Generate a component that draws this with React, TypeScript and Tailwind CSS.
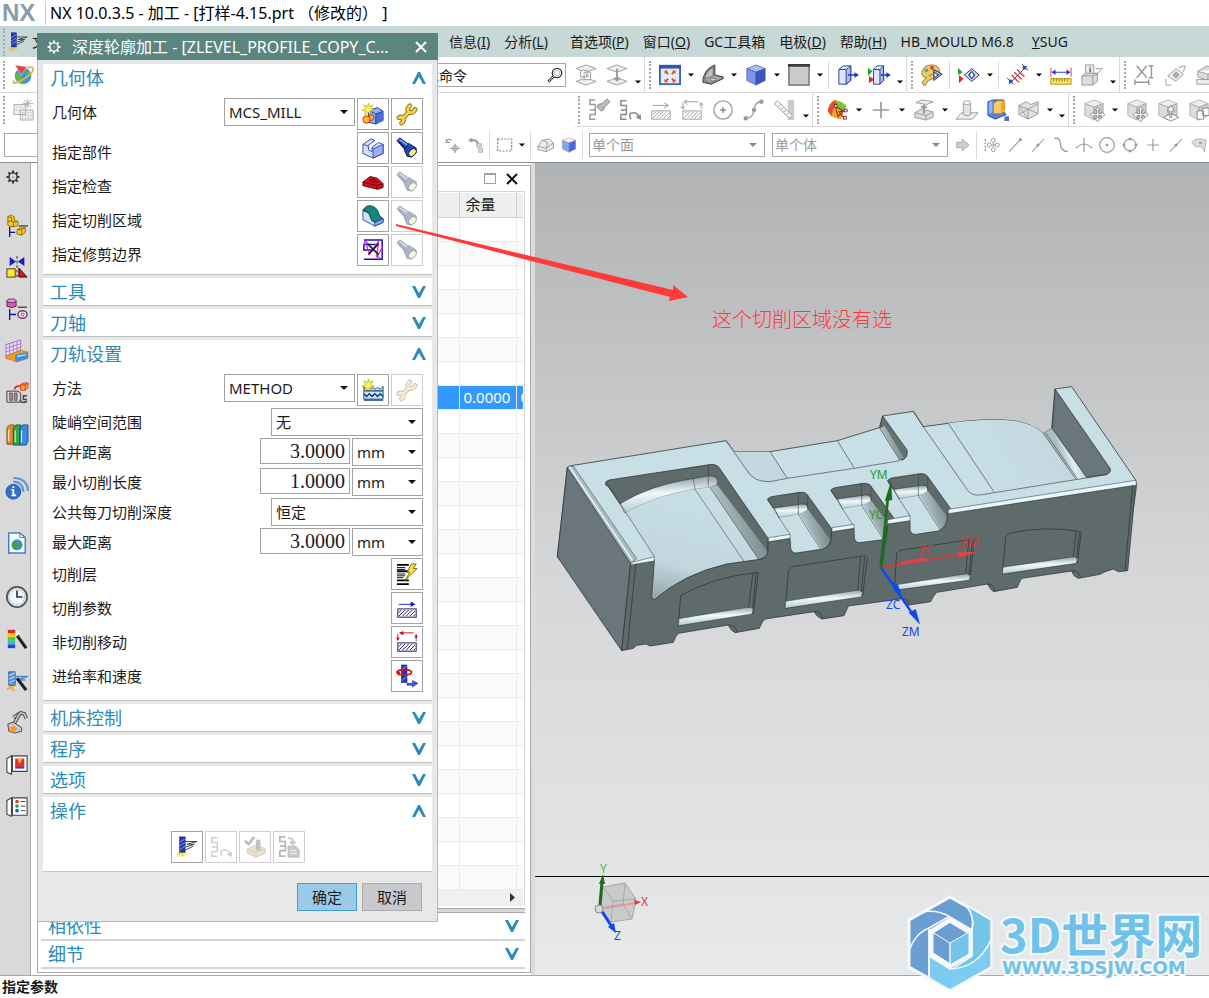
import React from 'react';

const BLUE = '#2e8ab8';

const flashlight = (
  <>
    <path d="M1 4 L4 1 L14 8 L10 14 Z" fill="#2f63d8" stroke="#0b1a6b" />
    <path d="M4 3 L13 9" stroke="#8db8ff" strokeWidth="1.4" />
    <path d="M3 5 L10 12" stroke="#0a1760" strokeWidth="1.6" />
    <path d="M14 7 L22 12 L22 17 L17 22 L12 21 L9 14 Z" fill="#2046b4" stroke="#0b1a6b" />
    <ellipse cx="18" cy="17" rx="3.4" ry="5" transform="rotate(42 18 17)" fill="#f9f16a" stroke="#0b1a6b" />
  </>
);

const wrenchShape = 'M15 3 Q11 7 14 10 Q18 12 21 7 M14 10 L7 17 M3 16 Q6 14 8 17 Q9 20 6 22';

const wrench = (
  <>
    <path d={wrenchShape} stroke="#8a6508" strokeWidth="5" strokeLinecap="round" strokeLinejoin="round" />
    <path d={wrenchShape} stroke="#f7cf48" strokeWidth="3.2" strokeLinecap="round" strokeLinejoin="round" />
  </>
);

const star = (
  <path d="M7 0 L8 4 L12 2 L10 6 L13 8 L9 9 L10 13 L7 10 L3 13 L4 9 L0 8 L4 6 L2 2 L6 4 Z" fill="#fff04a" stroke="#8f9a20" strokeWidth="0.6" />
);

const hatch = (color: string) => (
  <>
    <rect x="2" y="13" width="20" height="9" fill="#fff" stroke={color} />
    <path d="M3 21 L10 14 M7 21 L14 14 M11 21 L18 14 M15 21 L21 15 M19 21 L21 19 M3 17 L6 14" stroke={color} />
  </>
);

const tool = (
  <>
    <rect x="4" y="1" width="6" height="17" fill="#2438b0" stroke="#0b145e" strokeWidth="0.6" />
    <path d="M4 7 L10 3 M4 11 L10 7 M4 15 L10 11" stroke="#8d9ff0" />
    <path d="M10 6 H23 L12 9 H20 L11 12 M19 11 L11 15" stroke="#333b40" fill="none" />
    <path d="M1 21 L5 18 L3 23 M7 18 V23 M9 18 L12 21 M2 18 L10 22" stroke="#e8bd1c" />
  </>
);

const cube = (top: string, left: string, right: string, line: string) => (
  <>
    <path d="M12 1 L22 5 L12 9 L2 5 Z" fill={top} stroke={line} strokeWidth="0.7" />
    <path d="M2 5 L12 9 V23 L2 18 Z" fill={left} stroke={line} strokeWidth="0.7" />
    <path d="M22 5 L12 9 V23 L22 18 Z" fill={right} stroke={line} strokeWidth="0.7" />
  </>
);

const move = <path d="M16 9 L19 12 H17 V16 H20 V14 L24 17 L20 21 V18 H17 V21 H19 L16 25 L13 21 H15 V18 H12 V21 L8 17 L12 14 V16 H15 V12 H13 Z" fill="#fff" stroke="#7d7d7d" strokeWidth="0.9" />;

const s = '#9a9a9a';

const icons: Record<string, React.ReactNode> = {
  flashlight,
  wrench,
  tool,
  gear: (
    <>
      <circle cx="12" cy="12" r="7" fill="none" stroke="currentColor" strokeWidth="2.4" />
      <path d="M12 1 V5 M12 19 V23 M1 12 H5 M19 12 H23 M4 4 L7 7 M17 17 L20 20 M20 4 L17 7 M7 17 L4 20" stroke="currentColor" strokeWidth="3.4" />
      <circle cx="12" cy="12" r="1" fill="currentColor" />
    </>
  ),
  globe: (
    <>
      <circle cx="11" cy="13" r="9" fill="#3a97d8" />
      <path d="M4 9 Q10 10 10 15 T13 22 Q4 21 2 13 Z M15 6 L20 12 Q17 15 14 11 Z" fill="#62b746" />
      <path d="M1 18 Q-1 23 7 19 Q19 13 22 7 Q23 2 15 4" fill="none" stroke="#e0b34b" strokeWidth="2" />
      <path d="M2 1 L15 3 L9 12 Z" fill="#e0434a" stroke="#fff" strokeWidth="0.5" />
    </>
  ),
  grayGrid: (
    <>
      <path d="M1 6 H14 V17 H1 Z M8 12 H22 V23 H8 Z" fill="#eee" stroke="#aaa" />
      <path d="M3 9 H12 M3 12 H8 M10 15 H20 M10 18 H20 M10 21 H20" stroke="#999" strokeDasharray="1 2" />
      <path d="M16 0 V10 M11 5 H22 M12 1 L20 9 M20 1 L12 9" stroke="#aaa" />
    </>
  ),
  search: (
    <>
      <circle cx="15" cy="9" r="7" fill="none" stroke="#333" strokeWidth="2" />
      <circle cx="15" cy="9" r="4" fill="none" stroke="#999" />
      <path d="M10 14 L2 22" stroke="#333" strokeWidth="4" />
      <path d="M10 14 L3 21" stroke="#fff" strokeWidth="1.4" />
    </>
  ),
  layers: (
    <>
      <path d="M1 5 L12 1 L23 5 L12 9 Z M1 19 L12 15 L23 19 L12 23 Z" fill="#eee" stroke={s} />
      <path d="M6 7 H13 V14 H6 Z M10 9 H17 V17 H10 Z" fill="#fff" stroke={s} />
      <path d="M12 12 H15 M12 14 H15" stroke={s} />
    </>
  ),
  layersUp: (
    <>
      <path d="M1 5 L12 1 L23 5 L12 9 Z M1 19 L12 15 L23 19 L12 23 Z" fill="#eee" stroke={s} />
      <path d="M12 5 V17 M9 15 L12 18 L15 15" stroke={s} strokeWidth="2" />
    </>
  ),
  fit: (
    <>
      <rect x="1" y="2" width="22" height="20" fill="#e6ecf7" stroke="#3d63b0" strokeWidth="2" />
      <rect x="0" y="1" width="24" height="4" fill="#2f58ab" />
      <path d="M6 7 H10 L6 11 Z M18 7 H14 L18 11 Z M6 20 H10 L6 16 Z M18 20 H14 L18 16 Z" fill="#e64a25" />
      <path d="M7 8 L10 11 M17 8 L14 11 M7 19 L10 16 M17 19 L14 16" stroke="#e64a25" strokeWidth="2" />
    </>
  ),
  bracket: (
    <>
      <path d="M1 17 Q3 7 10 3 L14 1 V12 L23 14 V16 L10 22 L1 20 Z" fill="#8d8d8d" stroke="#333" />
      <path d="M3 16 Q5 7 12 4 V13 Z" fill="#c2c2c2" stroke="#555" strokeWidth="0.6" />
      <path d="M3 17 L13 13 L22 15 L10 20 Z" fill="#aaa" />
      <ellipse cx="12" cy="17" rx="3" ry="1.5" fill="#ddd" stroke="#333" strokeWidth="0.6" />
    </>
  ),
  cube: cube('#b3bdf3', '#8194e8', '#3c56bd', '#3b4f9e'),
  square: (
    <>
      <rect x="1" y="1" width="22" height="22" fill="#cacaca" stroke="#333" />
      <rect x="0" y="0" width="24" height="3" fill="#3a3a3a" />
    </>
  ),
  clip: (
    <>
      <path d="M2 6 L7 2 H15 V18 L10 22 H2 Z" fill="#dfe6fb" stroke="#223a8e" />
      <path d="M10 6 L15 2 V18 L10 22 Z" fill="#a9bdf3" stroke="#223a8e" />
      <path d="M2 6 H10" fill="none" stroke="#223a8e" />
      <path d="M12 12 H21" stroke="#1f2fd0" strokeWidth="1.6" />
      <path d="M19 9 L24 12 L19 15 Z" fill="#1f2fd0" />
    </>
  ),
  clipAll: (
    <>
      <path d="M0 4 L5 8 L0 13 Z" fill="#2da33b" />
      <path d="M1 13 L7 17 L1 21 Z" fill="#d8282c" />
      <path d="M6 6 L10 2 H17 V18 L13 22 H6 Z" fill="#dfe6fb" stroke="#223a8e" />
      <path d="M13 6 L17 2 V18 L13 22 Z" fill="#a9bdf3" stroke="#223a8e" />
      <path d="M6 6 H13" fill="none" stroke="#223a8e" />
      <path d="M14 12 H22" stroke="#1f2fd0" strokeWidth="1.6" />
      <path d="M20 9 L25 12 L20 15 Z" fill="#1f2fd0" />
    </>
  ),
  palette: (
    <>
      <path d="M1 9 Q3 1 12 1 Q21 2 20 9 Q18 14 12 12 L9 12 L13 16 L8 18 L4 24 L1 20 L6 15 Q0 14 1 9 Z" fill="#f1c95d" stroke="#94701c" />
      <circle cx="6" cy="7" r="2" fill="#3fa9e8" />
      <circle cx="12" cy="4" r="2" fill="#dd3c3c" />
      <path d="M14 6 L23 11 L14 18 Z" fill="#aac" stroke="#1c2d69" />
      <path d="M14 9 L19 12 L14 15 Z" fill="#fff" stroke="#1c2d69" />
    </>
  ),
  eye: (
    <>
      <path d="M0 4 L5 9 L0 12 Z" fill="#2da33b" />
      <path d="M1 12 L6 16 L1 21 Z" fill="#d8282c" />
      <path d="M7 12 L15 5 L23 12 L15 19 Z" fill="#d5dcef" stroke="#1c2d69" />
      <path d="M11 12 L15 7 L19 12 L15 17 Z" fill="#2b479c" />
      <path d="M13 12 L15 9 L17 12 L15 15 Z" fill="#fff" />
    </>
  ),
  spline: (
    <>
      <path d="M2 22 L22 2" stroke="#23308e" />
      <path d="M5 12 L13 20 M8 9 L16 17 M11 6 L19 14" stroke="#e23b3b" strokeWidth="1.6" />
      <path d="M0 15 L7 22 M16 0 L23 7" stroke="#222" />
      <circle cx="4" cy="19" r="2" fill="#2645e0" />
      <circle cx="19" cy="4" r="2" fill="#2645e0" />
    </>
  ),
  measure: (
    <>
      <rect x="1" y="16" width="22" height="6" fill="#ffe45c" stroke="#a88c13" />
      <path d="M4 16 V19 M7 16 V19 M10 16 V19 M13 16 V19 M16 16 V19 M19 16 V19" stroke="#8d7510" />
      <path d="M1 4 V14 M23 4 V14" stroke="#d33" />
      <path d="M2 9 H22" stroke="#2335c2" />
      <path d="M2 9 L6 6 V12 Z M22 9 L18 6 V12 Z" fill="#2335c2" />
    </>
  ),
  info: (
    <>
      <path d="M1 13 L6 10 H18 V19 L13 23 H1 Z" fill="#ddd" stroke={s} />
      <path d="M1 13 H13 L18 10 M13 13 V23" fill="none" stroke={s} />
      <rect x="5" y="1" width="9" height="9" fill="#eee" stroke={s} />
      <path d="M10 3 V4 M10 5 V9" stroke="#777" strokeWidth="2" />
      <path d="M16 13 L23 5 H16" fill="none" stroke={s} />
    </>
  ),
  dimX: (
    <path d="M3 2 L14 15 M14 2 L3 15 M1 17 V23 M16 17 V23 M1 20 H16 M16 2 H21 M16 15 H21 M19 2 V15" fill="none" stroke={s} strokeWidth="1.6" />
  ),
  rotate: (
    <>
      <path d="M3 13 L12 5 L20 11 L12 19 Z" fill="#eee" stroke={s} />
      <path d="M8 12 L12 8 L16 12 L12 16 Z" fill="#aaa" />
      <path d="M15 4 L22 2 L20 9 M1 16 V23 H7" fill="none" stroke={s} />
    </>
  ),
  boxRuler: (
    <>
      <path d="M2 8 L12 2 L23 6 V14 L13 18 L2 14 Z M2 8 L13 11 L23 6 M13 11 V18" fill="#ddd" stroke={s} />
      <rect x="1" y="17" width="22" height="5" fill="#eee" stroke={s} />
    </>
  ),
  pathLight: (
    <>
      <path d="M8 1 H2 V6 H8 V12 H2 M8 12 V17 H2 M2 17 V22 H8" fill="none" stroke={s} strokeWidth="1.6" />
      <path d="M24 3 L21 0 L15 5 L11 6 L10 9 L14 13 L17 12 L18 9 Z" fill="#bbb" stroke="#888" />
    </>
  ),
  pathRedo: (
    <>
      <path d="M8 2 H2 V7 H8 V12 H2 M8 12 V17 H2 M2 17 V22 H8" fill="none" stroke="#8a8a8a" strokeWidth="1.6" />
      <path d="M13 22 Q9 15 16 15 Q20 15 22 20" fill="none" stroke="#8a8a8a" strokeWidth="1.8" />
      <path d="M18 20 L24 17 V23 Z" fill="#8a8a8a" />
    </>
  ),
  hatchGray: (
    <>
      {hatch(s)}
      <path d="M3 7 H20 M15 4 L20 7 L15 10" fill="none" stroke={s} />
    </>
  ),
  hatchGray2: (
    <>
      {hatch(s)}
      <path d="M4 3 H19 M7 1 L3 3 L7 6 M2 4 V11 M0 8 L2 11 L4 8 M22 11 V4 M20 7 L22 4 L24 7" fill="none" stroke={s} />
    </>
  ),
  circlePlus: (
    <>
      <circle cx="12" cy="12" r="10" fill="none" stroke={s} strokeWidth="1.4" />
      <path d="M12 9 V15 M9 12 H15" stroke={s} strokeWidth="2" />
    </>
  ),
  curve: (
    <>
      <path d="M3 21 Q11 21 12 12 Q13 3 20 3" fill="none" stroke={s} strokeWidth="1.4" />
      <circle cx="3" cy="21" r="2.4" fill={s} />
      <circle cx="12" cy="12" r="2.4" fill={s} />
      <circle cx="20" cy="3" r="2.4" fill={s} />
    </>
  ),
  ruler: (
    <>
      <rect x="15" y="1" width="7" height="22" fill="#ccc" />
      <path d="M0 5 L4 2 L20 18 L17 21 Z" fill="#f4f4f4" stroke={s} />
      <path d="M5 8 L7 6 M8 11 L10 9 M11 14 L13 12 M14 17 L16 15" stroke={s} />
    </>
  ),
  rainbow: (
    <>
      <path d="M1 14 Q1 4 9 1 Q17 2 21 8 L15 22 Q6 22 1 14 Z" fill="#f2a62b" />
      <path d="M1 13 Q2 4 9 1 L11 5 Q6 10 5 19 Z" fill="#e34b32" />
      <path d="M11 3 Q17 3 21 8 L18 14 Q12 14 11 3 Z" fill="#6ccb3a" />
      <path d="M9 8 L18 13 M9 8 L12 19 L18 13 L13 14 L18 20" fill="none" stroke="#a81f1f" strokeWidth="1.2" />
      <path d="M8 6 H11 V9 H8 Z M19 11 H22 V14 H19 Z M18 19 H21 V22 H18 Z" fill="#fff" stroke="#712222" />
    </>
  ),
  plus: <path d="M12 3 V21 M3 12 H21" stroke={s} strokeWidth="1.8" />,
  extrude: (
    <>
      <path d="M3 4 L10 1 L22 3 L15 6 Z" fill="#eee" stroke={s} />
      <path d="M2 15 L9 11 L22 14 V20 L14 23 L2 20 Z" fill="#ddd" stroke={s} />
      <path d="M2 15 L14 18 L22 14 M14 18 V23" fill="none" stroke={s} />
      <path d="M12 16 V8 M9 10 L12 7 L15 10" fill="none" stroke={s} strokeWidth="2" />
    </>
  ),
  boss: (
    <>
      <path d="M0 22 L6 15 H24 L18 22 Z" fill="#eee" stroke={s} />
      <path d="M8 4 V17 Q12 20 16 17 V4" fill="#e4e4e4" stroke={s} />
      <ellipse cx="12" cy="4" rx="4" ry="2" fill="#fff" stroke={s} />
    </>
  ),
  blueBox: (
    <>
      <path d="M1 3 L6 1 H18 V14 L21 17 L9 22 L1 18 Z" fill="#4e83e0" stroke="#2950a8" />
      <path d="M2 3 L6 2 V15 L2 16 Z" fill="#8fb5f3" />
      <path d="M7 5 L11 2 H19 V13 L15 16 H7 Z" fill="#ffce5a" stroke="#b98011" />
      <path d="M15 5 L19 2 V13 L15 16 Z" fill="#f0a93a" />
      <rect x="19" y="19" width="5" height="5" fill="#56c" />
    </>
  ),
  mesh: (
    <>
      <path d="M1 7 L9 3 L14 6 L22 3 V16 L11 22 L1 17 Z" fill="#e2e2e2" stroke={s} />
      <path d="M1 7 L11 11 L22 5 M11 11 V22 M1 7 L11 22 M11 11 L22 16 M1 17 L11 11" fill="none" stroke={s} />
    </>
  ),
  cubeMove: (
    <>
      {cube('#eee', '#ddd', '#ccc', s)}
      {move}
    </>
  ),
  cubeUp: (
    <>
      {cube('#eee', '#ddd', '#ccc', s)}
      <path d="M7 20 L15 16 L24 20 L15 24 Z M15 7 L19 13 H16 V20 H14 V13 H11 Z" fill="#fff" stroke="#888" />
    </>
  ),
  cubeCopy: (
    <>
      {cube('#eee', '#ddd', '#ccc', s)}
      <path d="M10 13 H17 V22 H10 Z M16 10 H23 V18 H16 Z" fill="#fff" stroke="#888" />
    </>
  ),
  orient: (
    <>
      <path d="M2 8 Q4 1 10 5 M2 3 V8 H7 M15 10 V24 M8 17 H22" fill="none" stroke={s} strokeWidth="1.8" />
      <circle cx="15" cy="17" r="4" fill="none" stroke={s} strokeWidth="1.4" />
    </>
  ),
  links: (
    <>
      <path d="M1 5 H9 M9 5 Q14 5 15 12 M5 2 V8" fill="none" stroke={s} strokeWidth="3" />
      <path d="M13 10 H20 V15 H13 Z M16 17 H22 V23 H16 Z" fill="#ddd" stroke={s} />
    </>
  ),
  marquee: <rect x="1" y="3" width="21" height="18" fill="none" stroke="#888" strokeDasharray="3 2" strokeWidth="1.8" />,
  wireBox: (
    <>
      <path d="M0 14 L6 5 L17 3 L23 9 V17 L12 22 L0 19 Z" fill="#ececec" stroke={s} strokeWidth="1.4" />
      <path d="M0 14 L12 17 L23 9 M6 5 L14 8 L12 22" fill="none" stroke={s} strokeWidth="1.4" />
    </>
  ),
  shadeBox: cube('#f0f5ff', '#5fb4f5', '#4968df', '#c77'),
  go: <path d="M2 8 H11 V3 L21 12 L11 21 V16 H2 Z" fill="#ccc" stroke={s} />,
  snapAll: (
    <>
      <path d="M2 3 V21" stroke={s} strokeDasharray="3 2" strokeWidth="2" />
      <circle cx="14" cy="5" r="3" fill="none" stroke={s} strokeWidth="1.4" />
      <circle cx="14" cy="19" r="3" fill="none" stroke={s} strokeWidth="1.4" />
      <circle cx="8" cy="12" r="3" fill="none" stroke={s} strokeWidth="1.4" />
      <circle cx="20" cy="12" r="3" fill="none" stroke={s} strokeWidth="1.4" />
      <path d="M14 9 V15 M11 12 H17" stroke={s} strokeWidth="1.4" />
    </>
  ),
  lineEnd: (
    <>
      <path d="M3 22 L20 4" stroke={s} strokeWidth="1.6" />
      <circle cx="20" cy="4" r="2.4" fill={s} />
    </>
  ),
  lineMid: (
    <>
      <path d="M3 22 L21 3" stroke={s} strokeWidth="1.6" />
      <circle cx="12" cy="12" r="2.4" fill={s} />
    </>
  ),
  sCurve: <path d="M2 2 Q12 1 11 11 Q12 21 22 22" fill="none" stroke={s} strokeWidth="2" />,
  cross: <path d="M12 1 V23 M0 17 Q12 4 24 17" fill="none" stroke={s} strokeWidth="1.8" />,
  target: (
    <>
      <circle cx="12" cy="12" r="11" fill="none" stroke={s} strokeWidth="1.8" />
      <circle cx="12" cy="12" r="2" fill={s} />
    </>
  ),
  quad: (
    <>
      <circle cx="12" cy="12" r="9" fill="none" stroke={s} strokeWidth="1.6" />
      <path d="M10 1 H14 V5 H10 Z M10 19 H14 V23 H10 Z M1 10 H5 V14 H1 Z M19 10 H23 V14 H19 Z" fill={s} />
    </>
  ),
  surf: (
    <>
      <path d="M1 8 Q9 -1 23 5 L20 22 Q18 12 7 15 Z" fill="#ddd" stroke={s} />
      <circle cx="14" cy="9" r="2" fill={s} />
    </>
  ),
  newBox: (
    <>
      <path d="M7 8 L17 5 L23 9 V19 L15 23 L7 21 Z" fill="#8fb2f3" stroke="#22389b" />
      <path d="M15 12 L23 9 V19 L15 23 Z" fill="#4b6fd8" />
      <path d="M7 8 L15 12 L23 9 M15 12 V23" fill="none" stroke="#22389b" />
      {star}
      <circle cx="10" cy="16" r="3" fill="#ffb52b" stroke="#d11" />
      <circle cx="5" cy="18" r="4" fill="#ffc13a" stroke="#d11" />
    </>
  ),
  part: (
    <>
      <path d="M1 8 L10 2 L14 4 L7 9 V14 L11 16 V11 L18 6 L23 8 V18 L12 23 L1 18 Z" fill="#cfe0fb" stroke="#3643b5" />
      <path d="M12 13 L23 8 V18 L12 23 Z" fill="#9caef0" stroke="#3643b5" />
      <path d="M1 8 L7 10 M11 12 L12 13" stroke="#3643b5" />
    </>
  ),
  check: (
    <>
      <path d="M1 12 L9 6 L17 8 L23 14 V18 L17 20 L1 16 Z" fill="#d8101c" stroke="#5d0408" />
      <path d="M1 12 L16 16 L23 14 M16 16 V20" fill="none" stroke="#5d0408" />
      <path d="M8 10 L12 9 L17 12 L12 12 Z" fill="none" stroke="#5d0408" />
    </>
  ),
  area: (
    <>
      <path d="M1 6 L1 16 L14 23 L23 19 V15 L15 12 Z" fill="#cfe3fa" stroke="#2c46a5" />
      <path d="M1 6 Q4 0 10 1 Q17 3 18 9 Q19 13 23 15 L14 19 Q10 18 9 13 Q7 6 1 6 Z" fill="#15857f" stroke="#063f4b" />
      <path d="M14 19 L23 15 V19 L14 23 Z" fill="#8eaaf0" stroke="#2c46a5" />
    </>
  ),
  trim: (
    <>
      <path d="M2 1 H22 V22 H2 M2 6 V12 H13 M15 6 H2" fill="none" stroke="#1010c0" strokeWidth="1.6" />
      <path d="M4 4 L8 16 L18 3 L16 20 L23 8 M2 5 Q4 0 6 5 M15 18 L20 21" fill="none" stroke="#e11de1" strokeWidth="1.4" />
      <path d="M6 5 L18 17 M18 5 L7 17" stroke="#222" strokeWidth="1.8" />
    </>
  ),
  method: (
    <>
      <path d="M2 8 V22 H23 V8 Q20 13 17 9 Q14 13 12 9 Q9 13 7 9 Q4 13 2 8" fill="#cfe6f7" stroke="#0b4f8a" />
      <path d="M2 16 L5 19 L8 16 L11 19 L14 16 L17 19 L20 16 L23 19" fill="none" stroke="#0b3f7a" strokeWidth="1.6" />
      <path d="M2 23 H23 M2 13 H23" stroke="#0b3f7a" strokeWidth="1.4" />
      {star}
    </>
  ),
  levels: (
    <>
      <path d="M1 2 H14 M1 9 H13 M1 19 H14 M1 23 H14" stroke="#000" strokeWidth="2" />
      <path d="M1 5 H10 M1 7 H10 M1 12 H10 M1 14 H10 M1 16 H8" stroke="#000" />
      <path d="M17 1 H22 L19 6 H23 L10 19 L15 10 H12 Z" fill="#ffe23a" stroke="#6e6212" />
    </>
  ),
  cutParam: (
    <>
      {hatch('#0b0b55')}
      <path d="M3 8 H20" stroke="#1616c8" />
      <path d="M16 5 L21 8 L16 11 Z" fill="#1616c8" />
    </>
  ),
  nonCut: (
    <>
      {hatch('#0b0b55')}
      <path d="M5 2 H19 M2 3 V10 M22 11 V5" stroke="#c81616" />
      <path d="M8 0 L3 2 L8 5 Z M0 7 L2 11 L4 7 Z M20 7 L22 3 L24 7 Z" fill="#c81616" />
    </>
  ),
  feed: (
    <>
      <rect x="6" y="0" width="6" height="19" fill="#2438b0" stroke="#0b145e" strokeWidth="0.6" />
      <path d="M6 5 L12 1 M6 17 L12 13" stroke="#8d9ff0" />
      <ellipse cx="9" cy="8" rx="8" ry="3" fill="none" stroke="#d01818" strokeWidth="1.8" />
      <path d="M0 7 L3 12 L5 7 Z" fill="#d01818" />
      <path d="M12 20 H18 V17 L24 20 L18 24 V22 H12 Z" fill="#3b5fe0" stroke="#14257c" strokeWidth="0.6" />
    </>
  ),
  verify: (
    <>
      <path d="M4 14 L13 10 L23 14 V19 L13 23 L4 19 Z" fill="#e2b82a" stroke="#a07c10" />
      <path d="M4 14 L13 18 L23 14 M13 18 V23" fill="none" stroke="#c08080" />
      <rect x="13" y="4" width="5" height="12" fill="#5a62a8" />
      <path d="M1 5 L5 9 L11 1" fill="none" stroke="#257a35" strokeWidth="3" />
    </>
  ),
  report: (
    <>
      <path d="M8 1 H2 V6 H8 V11 H2 M8 11 V16 H2 M2 16 V22 H8" fill="none" stroke="#444" strokeWidth="1.8" />
      <path d="M11 11 H19 L23 15 V23 H11 Z" fill="#77809a" stroke="#444" />
      <path d="M13 16 H20 M13 19 H20" stroke="#ddd" />
      <path d="M11 2 Q17 2 16 8 M13 6 L16 9 L19 6" fill="none" stroke="#b8623b" strokeWidth="2" />
    </>
  ),
  assembly: (
    <>
      <path d="M2 3 L5 1 L9 3 V7 L13 8 V13 L5 14 L2 12 Z" fill="#f8c72e" stroke="#8f6a06" />
      <path d="M2 8 H8 V14 M2 3 L6 4 V8 M8 9 L13 8" fill="none" stroke="#8f6a06" />
      <path d="M12 17 L16 15 H21 V20 L17 23 L12 22 Z" fill="#f8c72e" stroke="#8f6a06" />
      <path d="M12 17 H17 V23 M17 17 L21 15" fill="none" stroke="#8f6a06" />
      <path d="M4 14 V25 M4 20 H10" stroke="#101090" strokeWidth="1.4" />
      <path d="M14 13 H24" stroke="#222" strokeWidth="1.2" />
    </>
  ),
  constraint: (
    <>
      <path d="M4 1 L11 6 L4 11 Z M20 1 L13 6 L20 11 Z" fill="#1a1ad0" />
      <path d="M12 0 V24" stroke="#222" strokeDasharray="3 2" />
      <rect x="1" y="14" width="9" height="9" fill="#ffe92b" stroke="#333" />
      <path d="M14 13 L23 23 H14 Z" fill="#d01616" stroke="#400" />
    </>
  ),
  partNav: (
    <>
      <path d="M1 3 V9 Q6 12 11 9 V3" fill="#cd5fae" stroke="#6b1655" />
      <ellipse cx="6" cy="3" rx="5" ry="2" fill="#eaa5d6" stroke="#6b1655" />
      <path d="M4 12 V24 M4 18 H11" stroke="#101090" strokeWidth="1.4" />
      <path d="M13 10 H23" stroke="#222" strokeWidth="1.2" />
      <ellipse cx="18" cy="18" rx="5" ry="4" fill="#eee" stroke="#7b3b70" strokeWidth="1.6" />
      <circle cx="18" cy="18" r="1.6" fill="none" stroke="#7b3b70" />
    </>
  ),
  opNav: (
    <>
      <path d="M0 5 L16 0 V15 L0 20 Z" fill="#e9dff6" stroke="#9267c0" />
      <path d="M0 9 L16 4 M0 13 L16 8 M0 17 L16 12 M4 4 V19 M8 3 V18 M12 2 V17" stroke="#a77bc8" />
      <path d="M0 18 L9 14 L15 11 L24 13 V20 L12 24 L0 20 Z" fill="#f59a1c" stroke="#b96b0a" strokeWidth="0.6" />
      <path d="M10 16 L24 13 V20 L10 24 Z" fill="#3e8ee0" />
      <path d="M12 18 L22 16" stroke="#bcd9f7" strokeWidth="1.4" />
    </>
  ),
  machine: (
    <>
      <path d="M1 10 H13 L16 12 V22 H1 Z" fill="#d8d8d8" stroke="#333" />
      <path d="M4 12 V20 H7 V12 Z M9 12 V20 H12 V12 Z" fill="#999" stroke="#333" strokeWidth="0.7" />
      <path d="M15 20 Q18 24 23 21 M23 15 H19 V19 H23" stroke="#444" strokeWidth="1.6" />
      <path d="M9 8 Q11 3 16 5" stroke="#d33415" strokeWidth="1.8" />
      <path d="M16 3 L19 1 H24 V6 L21 9 H16 Z M16 3 H21 V9 M21 3 L24 1" fill="#f7a93b" stroke="#d33415" />
    </>
  ),
  books: (
    <>
      <path d="M1 4 L4 1 H9 L8 22 H1 Z" fill="#e3892d" stroke="#8c4c0c" />
      <path d="M8 5 L11 1 H16 L15 23 H8 Z" fill="#37a547" stroke="#155e20" />
      <path d="M15 5 L18 1 H24 V19 L22 23 H15 Z" fill="#3b8be0" stroke="#154a8c" />
      <path d="M3 6 V19 M10 7 V20 M17 7 V20" stroke="#fff" />
    </>
  ),
  wifi: (
    <>
      <circle cx="8" cy="15" r="8" fill="#2f72c9" stroke="#1b4d96" />
      <path d="M8 9 V11 M6 13 H8 V19 M6 19 H11" stroke="#fff" strokeWidth="2" fill="none" />
      <path d="M8 4 Q18 4 19 15 M8 0 Q23 0 24 14" fill="none" stroke="#5c93d6" strokeWidth="2.4" />
    </>
  ),
  webDoc: (
    <>
      <path d="M3 1 H15 L21 6 V23 H3 Z" fill="#fff" stroke="#3f7fcf" strokeWidth="1.6" />
      <path d="M15 1 V6 H21" fill="none" stroke="#3f7fcf" />
      <circle cx="12" cy="14" r="6" fill="#3c8fd5" />
      <path d="M8 11 Q14 10 12 16 L9 19 Q4 15 8 11 Z M15 10 L18 14 L15 18 Z" fill="#3ea53f" />
    </>
  ),
  clock: (
    <>
      <circle cx="12" cy="12" r="11" fill="#d9e6f7" stroke="#555" strokeWidth="2" />
      <circle cx="12" cy="12" r="8" fill="#f2f7fd" stroke="#6f93c8" strokeDasharray="1 3" />
      <path d="M12 5 V12 H18" fill="none" stroke="#333" strokeWidth="1.8" />
    </>
  ),
  spectrum: (
    <>
      <path d="M2 2 H10 V6 H2 Z" fill="#e8281e" />
      <path d="M2 6 H10 V10 H2 Z" fill="#f8c51b" />
      <path d="M2 10 H10 V14 H2 Z" fill="#4fc93c" />
      <path d="M2 14 H10 V18 H2 Z" fill="#23c5e0" />
      <path d="M2 18 H10 V22 H2 Z" fill="#2740dd" />
      <path d="M12 8 L22 22" stroke="#222" strokeWidth="3.4" />
      <path d="M12 3 V9 M9 6 H16 M15 3 L11 9" stroke="#fff" />
    </>
  ),
  wand: (
    <>
      <path d="M3 2 H10 V17 H3 Z" fill="#5996dd" stroke="#215ca8" />
      <path d="M3 6 L10 3 M3 10 L10 7 M3 14 L10 11" stroke="#cfe2f7" />
      <path d="M10 7 H24 L12 11 H21" fill="none" stroke="#4b88cc" strokeWidth="1.6" />
      <path d="M12 9 L22 22" stroke="#222" strokeWidth="3.4" />
      <path d="M1 21 L10 17 M3 17 L9 23" stroke="#f0a92b" strokeWidth="1.6" />
    </>
  ),
  robot: (
    <>
      <path d="M8 6 L16 1 L20 2 L22 7" stroke="#444" strokeWidth="4" strokeLinejoin="round" />
      <path d="M8 6 L16 1 L20 2 L22 7" stroke="#c4c4c4" strokeWidth="2" strokeLinejoin="round" />
      <path d="M15 2 L8 14" stroke="#444" strokeWidth="4" />
      <path d="M15 2 L8 14" stroke="#c4c4c4" strokeWidth="2" />
      <path d="M2 13 L8 11 L17 17 V21 L10 23 L3 21 Z" fill="#c9c9c9" stroke="#444" />
      <path d="M4 17 L9 15 L12 18 L10 22 L5 22 Z" fill="#f49a2a" />
    </>
  ),
  cardM: (
    <>
      <path d="M1 5 L6 2 V22 L1 20 Z M7 2 H23 V19 H7 Z" fill="#fff" stroke="#444" strokeWidth="1.2" />
      <path d="M10 5 H20 V15 H10 Z" fill="#e03228" />
      <path d="M12 5 L15 11 L18 5 Z" fill="#f5b23c" />
      <path d="M10 15 H20" stroke="#2b52c8" strokeWidth="2" />
    </>
  ),
  cardList: (
    <>
      <path d="M1 5 L6 2 V22 L1 20 Z M7 2 H23 V21 H7 Z" fill="#fff" stroke="#444" strokeWidth="1.2" />
      <circle cx="12" cy="6" r="2" fill="#e03228" />
      <circle cx="12" cy="11" r="2" fill="#36a13c" />
      <circle cx="12" cy="16" r="2" fill="#2b52c8" />
      <path d="M16 6 H21 M16 11 H21 M16 16 H21" stroke="#333" />
    </>
  ),
};

const Icon: React.FC<{ name: string; className?: string }> = ({ name, className = 'h-[22px] w-[22px]' }) => (
  <svg viewBox="0 0 24 24" className={`${className} shrink-0 overflow-visible`} fill="none" aria-hidden="true">
    {icons[name]}
  </svg>
);

const Caret: React.FC<{ className?: string }> = ({ className = 'text-[#222]' }) => (
  <svg viewBox="0 0 8 4" className={`h-1 w-2 shrink-0 ${className}`} aria-hidden="true">
    <path d="M0 0 H8 L4 4 Z" fill="currentColor" />
  </svg>
);

const Grip = () => (
  <span className="flex h-full w-2 shrink-0 items-center justify-center">
    <span className="h-7 border-l-2 border-dotted border-[#a8a8a8]" />
  </span>
);

// Toolbars are described as short token lists: icon names plus
// '>' drop arrow, '|' separator, '^' overflow arrow, '#' group boundary with grip
const ToolStrip: React.FC<{ items: string[]; small?: boolean }> = ({ items, small }) => (
  <>
    {items.map((item, i) => {
      if (item === '>') {
        return (
          <button key={i} aria-label="下拉" className="flex h-full w-3 shrink-0 items-center justify-center">
            <Caret className="w-[6px] text-black" />
          </button>
        );
      }
      if (item === '^') {
        return (
          <button key={i} aria-label="更多" className="flex h-full w-3 shrink-0 items-end justify-center pb-2">
            <Caret className="w-[6px] text-black" />
          </button>
        );
      }
      if (item === '|') return <span key={i} className="mr-[3px] ml-[2px] h-7 w-px shrink-0 bg-[#d8d8d8]" />;
      if (item === '#') {
        return (
          <span key={i} className="flex h-full shrink-0">
            <span className="mr-px h-full w-px bg-[#d8d8d8]" />
            <Grip />
          </span>
        );
      }
      return (
        <button
          key={i}
          aria-label={item}
          className={small ? 'flex w-[23px] shrink-0 items-center justify-center' : 'flex w-[31px] shrink-0 items-center justify-center'}
        >
          <Icon name={item} className={small ? 'h-4 w-4' : 'h-[22px] w-[22px]'} />
        </button>
      );
    })}
  </>
);

const menus = [
  ['信息', 'I'],
  ['分析', 'L'],
  ['首选项', 'P'],
  ['窗口', 'O'],
  ['GC工具箱', ''],
  ['电极', 'D'],
  ['帮助', 'H'],
  ['HB_MOULD M6.8', ''],
];

const MenuBar = () => (
  <nav className="flex h-[31px] items-center overflow-hidden bg-[#c7d8d6] text-sm whitespace-nowrap text-[#1a1a1a]">
    <div className="flex h-full w-[449px] shrink-0 items-center">
      <Grip />
      <Icon name="tool" className="h-5 w-5" />
      <button className="ml-1">
        文件(<u>F</u>)
      </button>
    </div>
    <div className="flex gap-[14px]">
      {menus.map(([label, key]) => (
        <button key={label} className={label === '首选项' ? 'ml-2' : ''}>
          {label}
          {key && (
            <>
              (<u>{key}</u>)
            </>
          )}
        </button>
      ))}
      <button className="ml-1">
        <u>Y</u>SUG
      </button>
    </div>
  </nav>
);

const FilterSelect: React.FC<{ label: string; value: string }> = ({ label, value }) => (
  <div className="relative w-[176px] shrink-0">
    <select aria-label={label} disabled className="block h-6 w-full appearance-none border border-[#a8a8a8] bg-white px-[2px] text-sm leading-none text-[#9a9a9a] opacity-100">
      <option>{value}</option>
    </select>
    <span className="pointer-events-none absolute top-[10px] right-2">
      <Caret className="block text-[#8a8a8a]" />
    </span>
  </div>
);

const Toolbars = () => (
  <div className="border-b border-[#868e96] bg-white">
    <div className="flex h-9 items-center overflow-hidden border-b border-[#d8d8d8]">
      <div className="flex h-full w-[403px] shrink-0 items-center">
        <Grip />
        <ToolStrip items={['globe']} />
      </div>
      <div className="relative mr-1 w-[163px] shrink-0">
        <input type="text" aria-label="查找命令" defaultValue="查找命令" className="block h-6 w-full border border-[#a8a8a8] bg-white px-[7px] text-sm text-[#1a1a1a]" />
        <span className="absolute top-1 right-[3px]">
          <Icon name="search" className="h-4 w-4" />
        </span>
      </div>
      <ToolStrip
        items={[
          'layers', 'layersUp', '^', '#', 'fit', '>', 'bracket', '>', 'cube', '>', 'square', '>', '|', 'clip', 'clipAll', '^', '#',
          'palette', '|', 'eye', '>', '|', 'spline', '>', 'measure', 'info', '^', '#', 'dimX', 'rotate', 'boxRuler',
        ]}
      />
    </div>
    <div className="flex h-[34px] items-center overflow-hidden">
      <div className="flex h-full w-[575px] shrink-0 items-center">
        <Grip />
        <ToolStrip items={['grayGrid']} />
      </div>
      <div className="flex h-full flex-1 items-center border-b border-[#d8d8d8]">
        <Grip />
        <ToolStrip
          items={[
            'pathLight', 'pathRedo', 'hatchGray', 'hatchGray2', 'circlePlus', 'curve', 'ruler', '^', '#', 'rainbow', '>', 'plus', '>',
            'extrude', '>', 'boss', 'blueBox', 'mesh', '>', '^', '#', 'cubeMove', '>', 'cubeMove', 'cubeUp', 'cubeCopy',
          ]}
        />
      </div>
    </div>
    <div className="flex h-[35px] items-center overflow-hidden">
      <div className="w-[441px] shrink-0 pl-1">
        <input type="text" aria-label="过滤器" className="block h-6 w-40 border border-[#a8a8a8] bg-white" />
      </div>
      <ToolStrip small items={['orient', 'links', '|', 'marquee', '>', '|', 'wireBox', 'shadeBox', '|']} />
      <div className="flex shrink-0 gap-[7px] px-[3px]">
        <FilterSelect label="面规则" value="单个面" />
        <FilterSelect label="体规则" value="单个体" />
      </div>
      <ToolStrip small items={['go', '|', 'snapAll', 'lineEnd', 'lineMid', 'sCurve', 'cross', 'target', 'quad', 'plus', 'lineMid', 'surf']} />
    </div>
  </div>
);

const SideBar = () => (
  <aside className="flex w-[31px] shrink-0 flex-col items-center border-r border-[#a8a8a8] bg-[#d9d9d9] pl-1 text-[#333]">
    <button aria-label="设置" className="mb-[14px] flex h-[27px] items-center pr-2">
      <Icon name="gear" className="h-[14px] w-[14px]" />
    </button>
    {['assembly', 'constraint', 'partNav', 'opNav', 'machine', 'books'].map(name => (
      <button key={name} aria-label={name} className="flex h-[42px] items-center">
        <Icon name={name} />
      </button>
    ))}
    {['wifi', 'webDoc'].map(name => (
      <button key={name} aria-label={name} className="mt-3 flex h-[42px] items-center">
        <Icon name={name} />
      </button>
    ))}
    <span className="h-3" />
    {['clock', 'spectrum', 'wand', 'robot', 'cardM', 'cardList'].map(name => (
      <button key={name} aria-label={name} className="flex h-[42px] items-center">
        <Icon name={name} />
      </button>
    ))}
  </aside>
);

const Chevron: React.FC<{ up?: boolean }> = ({ up }) => (
  <svg viewBox="0 0 14 12" className="h-3 w-[14px]" aria-hidden="true">
    <path d={up ? 'M0 12 L6 0 H8 L14 12 H11 L7 5 L3 12 Z' : 'M0 0 H3 L7 7 L11 0 H14 L8 12 H6 Z'} fill={BLUE} />
  </svg>
);

const Navigator = () => (
  <section className="ml-[6px] flex w-[494px] shrink-0 flex-col border border-[#a8a8a8] bg-white">
    <div className="flex h-[25px] items-center justify-end gap-[10px] pr-3">
      <button aria-label="最大化" className="h-[11px] w-3 border border-t-2 border-[#a0a0a0]" />
      <button aria-label="关闭">
        <svg viewBox="0 0 12 12" className="h-3 w-3">
          <path d="M1 1 L11 11 M11 1 L1 11" stroke="#111" strokeWidth="2" />
        </svg>
      </button>
    </div>
    <div className="mr-[5px] border-t border-r border-[#d4d4d4] pt-px pr-px">
      <table className="w-full table-fixed border-collapse text-[15px] text-[#1a1a1a]">
        <thead>
          <tr className="h-6 bg-[#efefef]">
            <th className="border-r border-b border-[#cfcfcf]" />
            <th className="w-[57px] border-r border-b border-[#cfcfcf] p-0 pl-[6px] text-left leading-[23px] font-normal">余量</th>
            <th className="w-[7px] border-b border-[#cfcfcf] p-0" />
          </tr>
        </thead>
        <tbody>
          {Array.from({ length: 28 }, (_, i) =>
            i === 7 ? (
              <tr key={i} className="h-6 bg-[#3399ff] text-white">
                <td className="border-r border-b border-[#e8e8e8]" />
                <td className="border-r border-b border-[#e8e8e8] p-0 pl-1 leading-[23px]">0.0000</td>
                <td className="overflow-hidden border-b border-[#e8e8e8] p-0 pl-1 leading-[23px]">0</td>
              </tr>
            ) : (
              <tr key={i} className={i % 2 ? 'h-6 bg-[#fafafa]' : 'h-6'}>
                <td className="border-r border-b border-[#ebebeb]" />
                <td className="border-r border-b border-[#ebebeb]" />
                <td className="border-b border-[#ebebeb]" />
              </tr>
            ),
          )}
        </tbody>
      </table>
      <div className="flex h-4 items-center justify-end bg-[#f0f0f0] pr-2">
        <svg viewBox="0 0 5 9" className="h-[9px] w-[5px]">
          <path d="M0 0 L5 4.5 L0 9 Z" fill="#333" />
        </svg>
      </div>
    </div>
    <div className="mt-[2px] mr-[5px] h-[5px] border-y border-[#a8a8a8] bg-[#d9d9d9]" />
    {['相依性', '细节'].map(label => (
      <button key={label} className="mr-[5px] ml-[3px] flex h-[28px] items-center justify-between border-b-2 border-[#d4d4d4] pr-[6px] pl-[7px] text-lg leading-none text-[#2e8ab8]">
        {label}
        <Chevron />
      </button>
    ))}
  </section>
);

const edge = { stroke: '#30383a', strokeWidth: 2.4, strokeLinejoin: 'round' as const };

const Slot: React.FC<{ x: number; y: number }> = ({ x, y }) => (
  <g transform={`translate(${x} ${y})`}>
    <path d="M683 390 Q682 384 695 380 L780 367 Q800 366 806 380 L874 475 L874 505 Q872 530 850 536 L797 428 L798 402 L700 414 Z" fill="#5f6a6b" {...edge} />
    <path d="M703 414 L785 402 Q806 402 803 418 Q798 430 775 433 L717 443 Z" fill="url(#fillet)" {...edge} strokeWidth={1.4} />
    <path d="M717 443 L775 433 L797 430 L860 530 L770 549 L750 530 L750 495 Z" fill="#c8dfe6" />
    <path d="M780 433 L803 418 L872 510 Q866 530 845 538 Z" fill="url(#wall)" />
    <path d="M717 443 L750 493 M775 433 L842 538 M775 368 L775 433 M683 386 L717 443 M803 378 V418" fill="none" {...edge} strokeWidth={1.6} />
  </g>
);

const Pocket: React.FC<{ outline: string; base: string; side: string }> = ({ outline, base, side }) => (
  <>
    <path d={outline} fill="#5f6a6b" {...edge} />
    <path d={base} fill="url(#fillet)" {...edge} strokeWidth={1.4} />
    <path d={side} fill="none" {...edge} />
  </>
);

const Part = () => (
  <g transform="translate(540 370) scale(0.33333)">
    <defs>
      <linearGradient id="fillet" x1="0" y1="0" x2="0.1" y2="1">
        <stop offset="0" stopColor="#7d8b8e" />
        <stop offset="0.5" stopColor="#eefafd" />
        <stop offset="1" stopColor="#b4cad0" />
      </linearGradient>
      <linearGradient id="wall" x1="0" y1="1" x2="1" y2="0.6">
        <stop offset="0" stopColor="#c8dfe6" />
        <stop offset="1" stopColor="#748385" />
      </linearGradient>
      <linearGradient id="channel" x1="0" y1="0.4" x2="1" y2="0">
        <stop offset="0.3" stopColor="#a9bdc2" />
        <stop offset="0.5" stopColor="#dff0f4" />
        <stop offset="0.8" stopColor="#9db0b5" />
      </linearGradient>
      <linearGradient id="floor" x1="0.6" y1="0" x2="0.3" y2="1">
        <stop offset="0" stopColor="#c8dfe6" />
        <stop offset="0.7" stopColor="#c1d7dd" />
        <stop offset="1" stopColor="#96a8ac" />
      </linearGradient>
      <linearGradient id="dome" x1="0" y1="0.3" x2="1" y2="0">
        <stop offset="0" stopColor="#c8dfe6" />
        <stop offset="0.75" stopColor="#c3d9df" />
        <stop offset="1" stopColor="#b2c6cb" />
      </linearGradient>
    </defs>
    {/* body in the top-face colour, darker faces laid over it */}
    <path
      d="M82 292 Q88 286 100 286 L558 212 L583 245 L690 245 L892 212 L1018 173 L1028 138 L1120 124 L1150 170 L1225 160 Q1340 143 1420 152 Q1475 160 1510 190 L1535 176 L1545 57 L1595 50 L1787 330 L1790 345 L1760 560 L250 800 L52 560 Z"
      fill="#c8dfe6"
      {...edge}
    />
    <path d="M1225 160 Q1340 143 1420 152 Q1475 160 1510 190 L1610 330 L1362 366 Z" fill="url(#dome)" />
    <path d="M558 212 L583 245 L690 245 L742 325 L690 335 Q640 335 622 310 Z" fill="#c3d9df" />
    <path d="M1510 190 L1535 176 L1640 322 L1605 328 Z" fill="url(#channel)" />
    <path d="M1545 57 L1710 295 Q1715 308 1700 313 L1640 322 L1537 176 Z" fill="#6b767b" {...edge} />
    <path d="M1028 138 L1101 240 Q1105 262 1088 270 L1078 268 L1020 175 Z" fill="#65736f" {...edge} />
    <path d="M1020 175 L1078 268 L1092 264 L1034 168 Z" fill="url(#wall)" />
    <path
      d="M558 212 L620 300 Q640 337 690 335 L742 325 L942 295 L1080 272 M690 245 L742 325 M892 212 L942 293 M1150 170 L1282 360 Q1297 378 1320 375 L1700 314 M1225 160 L1362 366 M1510 190 L1608 328 M1516 188 L1612 326 M1120 124 L1150 170"
      fill="none"
      {...edge}
      strokeWidth={1.8}
    />

    <path d="M197 345 Q194 334 208 330 L515 283 Q535 284 542 300 L684 505 L684 545 Q680 565 655 568 L520 350 L530 320 L460 326 Q330 345 240 402 L205 350 Z" fill="#5f6a6b" {...edge} />
    <path d="M240 402 Q330 345 460 326 L505 318 Q540 315 530 345 L510 352 L465 358 Q350 375 255 430 Z" fill="url(#fillet)" {...edge} strokeWidth={1.4} />
    <path d="M255 430 Q350 375 465 358 L510 352 L655 566 L612 574 Q440 605 342 690 L335 680 L343 560 Z" fill="url(#floor)" />
    <path d="M510 352 L532 345 L684 545 Q680 562 655 568 Z" fill="url(#wall)" />
    <path d="M465 358 L612 574 M510 352 L655 566 M505 285 L505 350 M460 326 L465 358 M198 334 L343 560" fill="none" {...edge} strokeWidth={1.6} />

    <Slot x={0} y={0} />
    <Slot x={190} y={-27} />
    <Slot x={360} y={-56} />

    <path d="M82 292 L52 560 L245 842 L272 580 Z" fill="#6b767c" {...edge} />
    <path
      d="M272 580 L343 572 L335 680 L342 690 Q430 612 560 582 L660 568 Q685 562 684 540 L686 515 L750 505 L752 535 Q755 550 770 549 L850 537 Q875 525 874 500 L876 485 L942 475 L943 505 Q948 520 960 518 L1038 508 L1043 462 L1110 452 L1110 480 Q1115 495 1130 493 L1195 483 Q1222 470 1222 440 L1225 430 L1787 345 L1763 602 L1735 605 L1720 597 L1695 605 L1680 613 L1615 625 Q1600 620 1595 603 L1445 625 Q1436 640 1432 652 L1360 665 Q1348 655 1343 642 L1190 667 Q1178 680 1172 695 L1100 706 Q1088 700 1088 686 L925 708 L912 737 L845 747 Q830 740 822 725 L675 747 Q665 755 658 775 L585 788 Q570 780 565 765 L415 790 Q405 800 400 817 L330 828 L318 822 L290 826 L280 835 L245 842 Z"
      fill="#5f6a6b"
      {...edge}
    />
    <path d="M82 292 L100 288 L290 566 L272 580 Z" fill="#a9bdc3" stroke="#30383a" strokeWidth="1.4" />
    <path d="M88 290 L278 572" stroke="#f0fbfd" strokeWidth="4" />
    <path d="M272 578 L343 560 L343 573 L274 584 Z M686 503 L750 493 L750 505 L686 515 Z M876 473 L942 463 L942 475 L876 485 Z M1043 449 L1110 437 L1110 452 L1043 462 Z M1225 418 L1787 331 L1790 345 L1225 431 Z" fill="#e8f7fb" stroke="#30383a" strokeWidth="1.6" />
    <path d="M287 582 L262 836 M1778 348 L1755 602 M565 765 Q590 765 590 786 M822 725 Q845 722 847 745 M1088 686 Q1105 685 1107 704 M1343 642 Q1360 642 1365 662 M1595 603 Q1615 600 1622 622" fill="none" {...edge} />

    <Pocket outline="M422 677 Q520 620 655 607 L640 730 L415 767 Z" base="M417 746 L628 711 L640 715 L636 732 L415 767 Z" side="M638 612 L626 714 M648 610 L638 716" />
    <Pocket outline="M756 590 L975 557 L982 562 L968 676 L735 715 L746 600 Z" base="M737 694 L956 660 L968 665 L964 680 L735 715 Z" side="M962 560 L953 662 M974 560 L964 666" />
    <Pocket outline="M1080 541 L1295 508 L1302 513 L1290 628 L1063 661 L1070 550 Z" base="M1065 645 L1280 611 L1292 616 L1288 630 L1063 661 Z" side="M1286 512 L1277 612 M1296 512 L1287 616" />
    <Pocket outline="M1407 490 Q1520 465 1624 486 L1612 578 L1387 612 L1397 500 Z" base="M1389 592 L1602 560 L1614 565 L1608 580 L1387 612 Z" side="M1608 486 L1600 562 M1618 488 L1610 566" />

    {/* work and machine coordinate systems */}
    <path d="M1023 592 L1043 390" stroke="#1e6b22" strokeWidth="8" />
    <path d="M1019 592 L1032 470 L1044 470 L1027 592 Z M1035 392 L1053 335 L1056 390 Z" fill="#1e6b22" stroke="#1e6b22" />
    <path d="M1023 592 L1260 554" stroke="#d33a3a" strokeWidth="5" />
    <path d="M1080 578 L1150 562 L1172 570 L1080 586 Z M1252 544 L1307 547 L1256 565 Z" fill="#e04545" stroke="#d33a3a" />
    <path d="M1023 592 L1120 735" stroke="#0b49f0" strokeWidth="7" />
    <path d="M1050 632 L1074 645 L1083 672 L1064 662 Z M1107 728 L1127 718 L1139 762 Z" fill="#0b49f0" stroke="#0b49f0" />
  </g>
);

const Viewport = () => (
  <main className="relative min-w-0 flex-1 overflow-hidden border-l-4 border-[#dcdcdc] bg-linear-to-b from-[#b1b2b4] via-[#d5d6d8] to-[#e8e9eb]">
    <div className="absolute inset-x-0 top-[713px] h-px bg-black" />
    <svg viewBox="535 163 674 812" className="absolute top-0 left-0 h-[812px] w-[674px]" fontFamily="Noto Sans, sans-serif" fontSize="12">
      <Part />
      <g fill="#2a9a2a">
        <text x="870" y="479">YM</text>
        <text x="869" y="519">YC</text>
      </g>
      <g fill="#e63030">
        <text x="919" y="554">XC</text>
        <text x="961" y="547">XM</text>
      </g>
      <g fill="#0b49f0">
        <text x="886" y="609">ZC</text>
        <text x="902" y="636">ZM</text>
      </g>

      <path d="M603 887 L625 883 L636 899 L632 919 L611 922 L600 908 Z" fill="#c9cacc" stroke="#a8a8a8" />
      <path d="M603 887 L613 901 L636 899 M613 901 L611 922 M625 883 L623 904 L632 919 M623 904 L600 908" fill="none" stroke="#a8a8a8" />
      <path d="M604 908 L636 903" stroke="#dd9a9a" strokeWidth="2" />
      <path d="M634 900 L641 902 L635 905 Z" fill="#e03a3a" />
      <path d="M600 905 L602 882" stroke="#1e6b22" strokeWidth="3" />
      <path d="M599 884 L603 874 L605 884 Z" fill="#1e6b22" />
      <path d="M601 910 L612 927" stroke="#0b49f0" strokeWidth="3" />
      <path d="M608 927 L614 923 L616 933 Z" fill="#0b49f0" />
      <circle cx="599" cy="909" r="4" fill="#d8d8d8" stroke="#888" />
      <text x="600" y="873" fill="#4dae4d">Y</text>
      <text x="641" y="906" fill="#e03a3a">X</text>
      <text x="614" y="940" fill="#0b49f0">Z</text>
      <text x="712" y="327" fill="#fa3a3a" fontSize="20" fontFamily="Noto Sans CJK SC, sans-serif" fontWeight="300">
        这个切削区域没有选
      </text>
    </svg>
  </main>
);

const Section: React.FC<{ title: string; open?: boolean; children?: React.ReactNode }> = ({ title, open, children }) => (
  <section className="mb-[3px] border-b border-[#c4c4c4] bg-white">
    <h2>
      <button aria-expanded={!!open} className="flex h-[27px] w-full items-center justify-between pr-[6px] pl-[7px] text-lg leading-none text-[#2e8ab8]">
        {title}
        <Chevron up={open} />
      </button>
    </h2>
    {open && <div className="flex flex-col gap-[2px] px-[9px] pt-[7px] pb-2">{children}</div>}
  </section>
);

const IconButton: React.FC<{ icon: string; label: string; disabled?: boolean }> = ({ icon, label, disabled }) => (
  <button
    aria-label={label}
    disabled={disabled}
    className="flex h-8 w-8 shrink-0 items-center justify-center border border-[#a3a3a3] bg-white disabled:border-[#cfcfcf] disabled:*:opacity-40 disabled:*:grayscale-50"
  >
    <Icon name={icon} />
  </button>
);

const Dropdown: React.FC<{ id?: string; label?: string; value: string; width: string }> = ({ id, label, value, width }) => (
  <div className={`relative shrink-0 ${width}`}>
    <select id={id} aria-label={label} className="block h-7 w-full appearance-none border border-[#a3a3a3] bg-white px-1 text-[15px] leading-none text-[#1a1a1a]">
      <option>{value}</option>
    </select>
    <span className="pointer-events-none absolute top-3 right-[7px]">
      <Caret className="block text-[#111]" />
    </span>
  </div>
);

const labelPad = {
  field: 'mr-auto pt-[2px] leading-6',
  action: 'mr-auto pt-1 leading-6',
  pick: 'mr-auto pt-2 leading-6',
};

const Row: React.FC<{ label: string; htmlFor?: string; kind?: keyof typeof labelPad; children: React.ReactNode }> = ({
  label,
  htmlFor,
  kind = 'field',
  children,
}) => (
  <div className="flex items-start gap-[2px]">
    <label htmlFor={htmlFor} className={labelPad[kind]}>
      {label}
    </label>
    {children}
  </div>
);

const LengthRow: React.FC<{ id: string; label: string; value: string }> = ({ id, label, value }) => (
  <Row label={label} htmlFor={id}>
    <input
      id={id}
      type="text"
      defaultValue={value}
      className="h-[26px] w-[90px] border border-[#a3a3a3] px-1 text-right font-['Liberation_Serif',serif] text-xl leading-none text-[#1a1a1a]"
    />
    <Dropdown label={`${label}单位`} value="mm" width="w-[71px]" />
  </Row>
);

const geometry = [
  { label: '指定部件', icon: 'part', off: false },
  { label: '指定检查', icon: 'check', off: true },
  { label: '指定切削区域', icon: 'area', off: true },
  { label: '指定修剪边界', icon: 'trim', off: true },
];

const settings = [
  { label: '切削层', icon: 'levels' },
  { label: '切削参数', icon: 'cutParam' },
  { label: '非切削移动', icon: 'nonCut' },
  { label: '进给率和速度', icon: 'feed' },
];

const OperationDialog = () => (
  <div role="dialog" aria-label="深度轮廓加工" className="absolute top-[33px] left-[37px] w-[401px] border border-[#b8b8b8] bg-[#e8e8e8] text-[15px] text-[#1a1a1a]">
    <header className="-mx-px -mt-px flex h-[27px] items-center bg-[#5b867f] pr-[11px] pl-[10px] text-white">
      <Icon name="gear" className="h-[14px] w-[14px]" />
      <h1 className="ml-[11px] min-w-0 flex-1 truncate text-base">深度轮廓加工 - [ZLEVEL_PROFILE_COPY_C...</h1>
      <button aria-label="关闭">
        <svg viewBox="0 0 12 12" className="h-3 w-3">
          <path d="M1 1 L11 11 M11 1 L1 11" stroke="#fff" strokeWidth="2" />
        </svg>
      </button>
    </header>
    <div className="px-[5px] pt-1">
      <Section title="几何体" open>
        <Row label="几何体" htmlFor="geometry">
          <Dropdown id="geometry" value="MCS_MILL" width="w-[131px]" />
          <IconButton icon="newBox" label="新建几何体" />
          <IconButton icon="wrench" label="编辑几何体" />
        </Row>
        {geometry.map(g => (
          <Row key={g.label} label={g.label} kind="pick">
            <IconButton icon={g.icon} label={g.label} />
            <IconButton icon="flashlight" label={`显示${g.label}`} disabled={g.off} />
          </Row>
        ))}
      </Section>
      <Section title="工具" />
      <Section title="刀轴" />
      <Section title="刀轨设置" open>
        <Row label="方法" htmlFor="method">
          <Dropdown id="method" value="METHOD" width="w-[131px]" />
          <IconButton icon="method" label="新建方法" />
          <IconButton icon="wrench" label="编辑方法" disabled />
        </Row>
        <Row label="陡峭空间范围" htmlFor="steep">
          <Dropdown id="steep" value="无" width="w-[152px]" />
        </Row>
        <LengthRow id="merge" label="合并距离" value="3.0000" />
        <LengthRow id="min-cut" label="最小切削长度" value="1.0000" />
        <Row label="公共每刀切削深度" htmlFor="depth">
          <Dropdown id="depth" value="恒定" width="w-[152px]" />
        </Row>
        <LengthRow id="max-dist" label="最大距离" value="3.0000" />
        {settings.map(item => (
          <Row key={item.label} label={item.label} kind="action">
            <IconButton icon={item.icon} label={item.label} />
          </Row>
        ))}
      </Section>
      <Section title="机床控制" />
      <Section title="程序" />
      <Section title="选项" />
      <Section title="操作" open>
        <div className="flex justify-center gap-[2px]">
          <IconButton icon="tool" label="生成" />
          <IconButton icon="pathRedo" label="重播" disabled />
          <IconButton icon="verify" label="确认" disabled />
          <IconButton icon="report" label="列表" disabled />
        </div>
      </Section>
    </div>
    <footer className="flex justify-end gap-[5px] px-[15px] pt-2 pb-[10px]">
      <button className="h-7 w-[60px] border border-[#3f9fd4] bg-[#9acbe6]">确定</button>
      <button className="h-7 w-[60px] border border-[#adadad] bg-[#c8c9cd]">取消</button>
    </footer>
  </div>
);

const Watermark = () => (
  <svg viewBox="905 890 304 104" className="pointer-events-none absolute right-0 bottom-1 h-[104px] w-[304px]">
    <g stroke="#f6f9fb" strokeWidth="1.5">
      <path d="M950 897 L991 920 V967 L950 990 L909 967 V920 Z" fill="#6a9ed3" strokeWidth="3" />
      <path d="M964 904 L991 920 V940 Q978 968 951 970 L972 956 V929 Q975 914 964 904 Z" fill="#72c4ea" />
      <path d="M991 940 V967 L950 990 L929 978 V956 L950 969 Q978 968 991 940 Z" fill="#7ccbf0" />
      <path d="M922 912 Q938 909 950 917 L972 930 Q975 914 964 904" fill="none" />
      <path d="M909 952 Q914 934 929 928 L950 916 M929 928 V978" fill="none" />
      <path d="M950 920 L970 932 V954 L950 966 L931 954 V932 Z" fill="#6a9ed3" strokeWidth="5" />
      <path d="M950 943 L969 932 V954 L950 965 Z" fill="#72c4ea" strokeWidth="1" />
      <path d="M932 932 L950 943 V965" fill="none" strokeWidth="1" />
    </g>
    <g fill="#6fc3ea" stroke="#f6f9fb" strokeWidth="4" paintOrder="stroke" fontWeight="700" strokeLinejoin="round">
      <text x="1000" y="953" fontSize="47" fontFamily="Noto Sans CJK SC, sans-serif">
        3D世界网
      </text>
      <text x="1002" y="974" fontSize="18" fontFamily="DejaVu Sans, sans-serif">
        WWW.3DSJW.COM
      </text>
    </g>
  </svg>
);

const App: React.FC = () => {
  return (
    <div className="relative flex min-h-screen flex-col overflow-hidden bg-white font-['Noto_Sans','Noto_Sans_CJK_SC',sans-serif]">
      <header className="flex h-[26px] items-center bg-white text-base whitespace-pre text-black">
        <span className="flex h-6 w-[46px] items-center border-r border-[#ccc] pl-[2px] font-['Liberation_Sans',sans-serif] text-2xl leading-none font-bold text-[#8a9bab]">NX</span>
        <span className="pl-1 leading-none">NX 10.0.3.5 - 加工 - [打样-4.15.prt （修改的） ]</span>
      </header>
      <MenuBar />
      <Toolbars />
      <div className="flex flex-1 border-b border-[#a8a8a8]">
        <SideBar />
        <div className="flex bg-white pt-[2px] pb-[2px]">
          <Navigator />
        </div>
        <Viewport />
      </div>
      <footer className="flex h-[22px] items-center bg-white pl-[2px] text-sm font-bold text-[#1a1a1a]">指定参数</footer>
      <OperationDialog />
      <svg viewBox="396 224 293 78" className="pointer-events-none absolute top-[224px] left-[396px] h-[78px] w-[293px]" aria-hidden="true">
        <path d="M396 224 L673 290 L673 285 L688 297 L669 301 L670 297 L396 226 Z" fill="#ff3a38" />
      </svg>
      <Watermark />
    </div>
  );
};

export default App;
